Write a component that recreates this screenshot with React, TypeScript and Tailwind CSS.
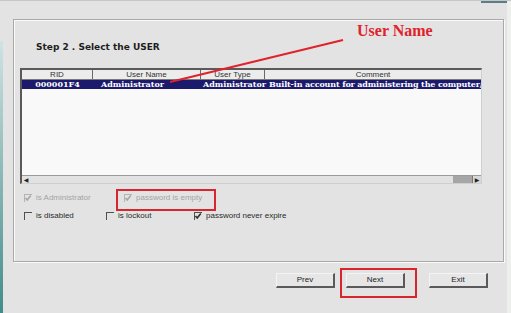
import React from "react"

const sans = { fontFamily: '"DejaVu Sans", Verdana, sans-serif' }
const serif = { fontFamily: '"DejaVu Serif", "Liberation Serif", serif' }
const label = { fontFamily: '"Liberation Sans", Arial, sans-serif' }

const CheckBox: React.FC<{ checked?: boolean; disabled?: boolean }> = ({
  checked,
  disabled,
}) => (
  <span
    className={`relative inline-block h-[8px] w-[8px] shrink-0 border-t border-l ${
      disabled ? "border-[#b4b4b4]" : "border-[#505050]"
    } bg-transparent`}
  >
    {checked && (
      <svg
        viewBox="0 0 8 8"
        className="absolute -top-[1px] -left-[1px] h-[8px] w-[8px]"
      >
        <path
          d="M1.5 4 L3.2 6 L6.8 1.5"
          fill="none"
          stroke={disabled ? "#a8a8a8" : "#303030"}
          strokeWidth="1.6"
        />
      </svg>
    )}
  </span>
)

const Option: React.FC<{
  label: string
  checked?: boolean
  disabled?: boolean
  width: string
}> = ({ label: text, checked, disabled, width }) => (
  <div className={`flex items-center gap-[4px] ${width}`}>
    <CheckBox checked={checked} disabled={disabled} />
    <span
      className={`text-[8px] leading-[10px] ${
        disabled ? "text-[#a4a4a4]" : "text-[#2a2a2a]"
      }`}
      style={label}
    >
      {text}
    </span>
  </div>
)

const Button: React.FC<{ label: string }> = ({ label: text }) => (
  <div
    className="flex h-[15px] w-[59px] items-center justify-center border-t border-l border-r-2 border-b-2 border-t-[#f4f4f4] border-l-[#f4f4f4] border-r-[#5a5a5a] border-b-[#5a5a5a] bg-[#e6e6e6] text-[8px] text-[#222]"
    style={label}
  >
    {text}
  </div>
)

const App: React.FC = () => {
  const columns = [
    { name: "RID", w: "w-[71px]" },
    { name: "User Name", w: "w-[108px]" },
    { name: "User Type", w: "w-[64px]" },
    { name: "Comment", w: "flex-1" },
  ]

  return (
    <div
      className="relative flex h-[313px] w-[511px] flex-col overflow-hidden border-t border-[#c4c8c8] bg-[#e3e3e3]"
      style={sans}
    >
      {/* window edges */}
      <div className="absolute top-[40px] bottom-0 left-0 w-[3px] bg-gradient-to-b from-[#cfe3e3] to-[#3f8d8a]" />
      <div className="absolute top-0 right-0 h-[2px] w-[30px] bg-[#5d7d86]" />
      <div className="absolute top-0 right-0 bottom-0 w-[4px] bg-[#eef0ee]" />

      {/* group panel */}
      <div className="mt-[18px] ml-[13px] flex h-[243px] w-[491px] flex-col border border-[#a9a9a9] pt-[21px] pl-[6px] shadow-[inset_1px_1px_0_#fafafa,1px_1px_0_#fafafa]">
        <h2 className="ml-[16px] text-[9px] leading-[12px] font-bold text-[#1e1e1e]">
          Step 2 . Select the USER
        </h2>

        {/* user table */}
        <div className="mt-[15px] flex h-[116px] w-[462px] flex-col border-t-2 border-l-2 border-r border-b border-t-[#5a5a5a] border-l-[#5a5a5a] border-r-[#cfcfcf] border-b-[#cfcfcf] bg-[#f9f9f9]">
          <div className="flex h-[10px] border-b border-[#7a7a7a] bg-[#ececec]">
            {columns.map((c, i) => (
              <div
                key={c.name}
                className={`${c.w} flex items-center justify-center text-[8px] leading-[9px] text-[#333] ${
                  i < columns.length - 1 ? "border-r border-[#6a6a6a]" : ""
                }`}
                style={label}
              >
                {c.name}
              </div>
            ))}
          </div>
          <div
            className="flex h-[9px] items-center overflow-hidden bg-[#1b1a6b] text-[8px] leading-[9px] font-bold whitespace-nowrap text-white"
            style={serif}
          >
            <div className="w-[71px] text-center">000001F4</div>
            <div className="w-[108px] pl-[8px]">Administrator</div>
            <div className="w-[64px] pl-[2px]">Administrator</div>
            <div className="flex-1 overflow-hidden pl-[4px] tracking-[-0.15px]">
              Built-in account for administering the computer/domain
            </div>
          </div>
          <div className="flex-1" />
          {/* horizontal scrollbar */}
          <div className="flex h-[8px] items-stretch border-t border-[#9a9a9a] bg-[#e2e2e2]">
            <div className="flex w-[8px] items-center justify-center text-[6px] leading-none text-[#222]">
              ◀
            </div>
            <div className="flex-1" />
            <div className="w-[19px] bg-[#a6a6a6]" />
            <div className="flex w-[9px] items-center justify-center border-l border-[#777] bg-[#d8d8d8] text-[6px] leading-none text-[#222]">
              ▶
            </div>
          </div>
        </div>

        {/* options */}
        <div className="mt-[9px] ml-[4px] flex h-[10px] items-center">
          <Option label="is Administrator" checked disabled width="w-[100px]" />
          <Option label="password is empty" checked disabled width="w-[100px]" />
        </div>
        <div className="mt-[8px] ml-[4px] flex h-[10px] items-center">
          <Option label="is disabled" width="w-[82px]" />
          <Option label="is lockout" width="w-[88px]" />
          <Option label="password never expire" checked width="w-[120px]" />
        </div>
      </div>

      {/* buttons */}
      <div className="mt-[11px] ml-[276px] flex items-center">
        <Button label="Prev" />
        <div className="ml-[11px]">
          <Button label="Next" />
        </div>
        <div className="ml-[24px]">
          <Button label="Exit" />
        </div>
      </div>

      {/* annotations */}
      <div
        className="absolute top-[20px] left-[357px] text-[16px] leading-[20px] font-bold text-[#e0222c]"
        style={{ fontFamily: '"Liberation Serif", "Times New Roman", serif' }}
      >
        User Name
      </div>
      <svg
        className="pointer-events-none absolute top-0 left-0"
        width="511"
        height="313"
      >
        <line x1="170" y1="81" x2="343" y2="39" stroke="#e0222c" strokeWidth="2" />
      </svg>
      <div className="pointer-events-none absolute top-[188px] left-[116px] h-[22px] w-[100px] border-2 border-[#d8262e]" />
      <div className="pointer-events-none absolute top-[267px] left-[340px] h-[30px] w-[77px] border-2 border-[#d8262e]" />
    </div>
  )
}

export default App
